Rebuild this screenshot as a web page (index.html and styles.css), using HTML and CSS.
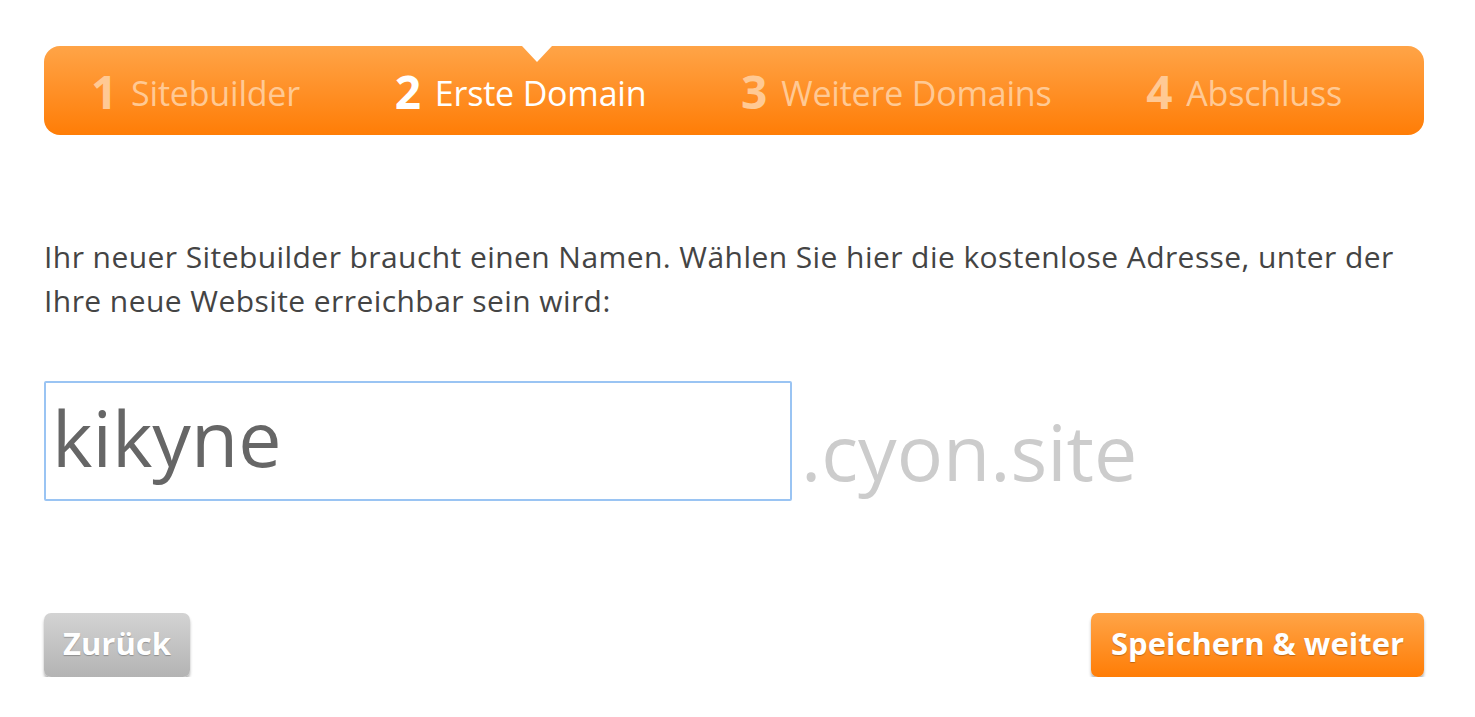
FILE: index.html
```html
<!DOCTYPE html>
<html lang="de">
<head>
<meta charset="utf-8">
<title>Sitebuilder – Erste Domain</title>
<link rel="stylesheet" href="styles.css">
</head>
<body>
<div class="wizard">
  <nav class="steps">
    <span class="notch"></span>
    <div class="step"><span class="num">1</span>Sitebuilder</div>
    <div class="step active"><span class="num">2</span>Erste Domain</div>
    <div class="step"><span class="num">3</span>Weitere Domains</div>
    <div class="step"><span class="num">4</span>Abschluss</div>
  </nav>

  <p class="intro">Ihr neuer Sitebuilder braucht einen Namen. Wählen Sie hier die kostenlose Adresse, unter der Ihre neue Website erreichbar sein wird:</p>

  <div class="domain-row">
    <input class="domain-input" type="text" value="kikyne">
    <span class="suffix">.cyon.site</span>
  </div>

  <div class="actions">
    <button class="btn btn-back" type="button">Zurück</button>
    <button class="btn btn-next" type="button">Speichern &amp; weiter</button>
  </div>
</div>
</body>
</html>
```

FILE: styles.css
```css
html, body {
  margin: 0;
  padding: 0;
  background: #ffffff;
}

body {
  font-family: "Open Sans", "DejaVu Sans", sans-serif;
  color: #444444;
}

.wizard {
  width: 1380px;
  margin: 46px 0 0 44px;
}

.steps {
  position: relative;
  display: flex;
  justify-content: space-between;
  align-items: center;
  height: 89px;
  padding: 0 82px 6px 47px;
  border-radius: 16px;
  background: linear-gradient(to bottom, #ffa447 0%, #ff9027 50%, #ff7d06 100%);
  box-sizing: border-box;
}

.notch {
  position: absolute;
  top: 0;
  left: 478px;
  width: 0;
  height: 0;
  border-left: 15px solid transparent;
  border-right: 15px solid transparent;
  border-top: 16px solid #ffffff;
}

.step {
  display: flex;
  align-items: baseline;
  font-size: 34px;
  color: #ffc994;
  letter-spacing: -0.2px;
  white-space: nowrap;
}

.step .num {
  font-size: 46px;
  font-weight: 700;
  margin-right: 14px;
  position: relative;
  top: 3px;
}

.step.active {
  color: #ffffff;
}

.intro {
  margin: 100px 0 0 0;
  font-size: 30px;
  line-height: 44px;
  letter-spacing: 0.43px;
  color: #444444;
  width: 1375px;
}

.domain-row {
  display: flex;
  align-items: flex-end;
  margin-top: 58px;
}

.domain-input {
  width: 748px;
  height: 120px;
  box-sizing: border-box;
  border: 2px solid #9ac4f3;
  border-radius: 2px;
  padding: 0 0 8px 6px;
  margin: 0;
  font-family: "Open Sans", "DejaVu Sans", sans-serif;
  font-size: 77px;
  color: #666666;
  outline: none;
  background: #ffffff;
}

.suffix {
  margin-left: 9px;
  font-size: 77px;
  color: #cccccc;
  line-height: 100px;
  position: relative;
  top: 1px;
}

.actions {
  display: flex;
  justify-content: space-between;
  margin-top: 112px;
}

.btn {
  height: 64px;
  border: none;
  border-radius: 7px;
  padding: 0 0 5px 0;
  font-family: "Open Sans", "DejaVu Sans", sans-serif;
  font-size: 31px;
  font-weight: 700;
  color: #ffffff;
  white-space: nowrap;
  text-shadow: 0 1px 1px rgba(0, 0, 0, 0.25);
  box-shadow: 0 3px 3px rgba(0, 0, 0, 0.3);
  cursor: pointer;
}

.btn-back {
  width: 146px;
  background: linear-gradient(to bottom, #d3d3d3 0%, #b3b3b3 100%);
}

.btn-next {
  width: 333px;
  background: linear-gradient(to bottom, #ffa447 0%, #ff7d06 100%);
}
```
